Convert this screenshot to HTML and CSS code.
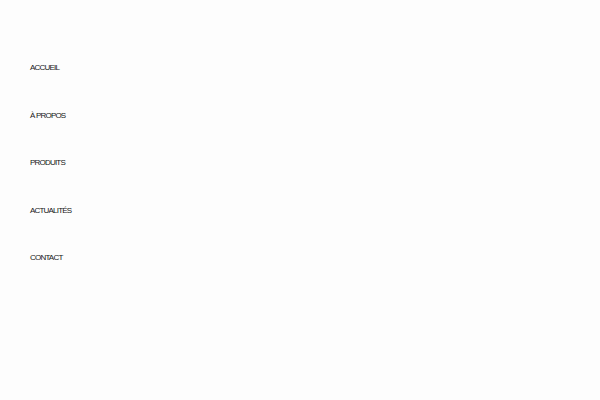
FILE: index.html
```html
<!DOCTYPE html>
<html lang="fr">
<head>
<meta charset="utf-8">
<link rel="stylesheet" href="styles.css">
</head>
<body>
<nav class="menu">
  <ul class="menu-list">
    <li class="menu-item"><a href="#">ACCUEIL</a></li>
    <li class="menu-item"><a href="#">À PROPOS</a></li>
    <li class="menu-item"><a href="#">PRODUITS</a></li>
    <li class="menu-item"><a href="#">ACTUALITÉS</a></li>
    <li class="menu-item"><a href="#">CONTACT</a></li>
  </ul>
</nav>
</body>
</html>
```
FILE: styles.css
```css
html, body {
  margin: 0;
  padding: 0;
  background: #fdfdfd;
  height: 100%;
}
body {
  font-family: "Liberation Sans", Arial, sans-serif;
}
.menu {
  padding: 63px 30px 0;
}
.menu-list {
  list-style: none;
  margin: 0;
  padding: 0;
  display: flex;
  flex-direction: column;
  gap: 37.5px;
}
.menu-item {
  height: 10px;
  line-height: 10px;
  font-size: 8px;
  letter-spacing: -0.8px;
}
.menu-item a {
  color: #151515;
  text-decoration: none;
}
```
